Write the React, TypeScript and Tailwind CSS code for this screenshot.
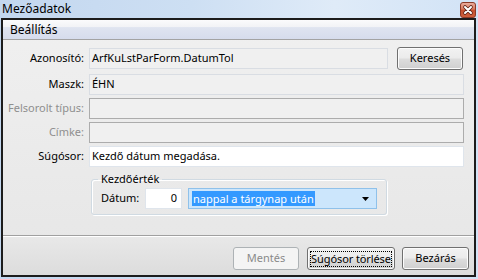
import React from "react";

function CloseButton() {
	return (
		<svg width="16" height="16" viewBox="0 0 16 16" className="mt-[2px]">
			<defs>
				<linearGradient id="cls" x1="0" y1="0" x2="0" y2="1">
					<stop offset="0" stopColor="#eab1a2" />
					<stop offset="0.45" stopColor="#d9775c" />
					<stop offset="0.5" stopColor="#c6502f" />
					<stop offset="1" stopColor="#d0603c" />
				</linearGradient>
			</defs>
			<rect x="0.5" y="0.5" width="15" height="15" rx="2.5" fill="url(#cls)" stroke="#8a3a27" />
			<path d="M5 5 L11 11 M11 5 L5 11" stroke="#5a2418" strokeWidth="3.6" strokeLinecap="round" />
			<path d="M5 5 L11 11 M11 5 L5 11" stroke="#ffffff" strokeWidth="2" strokeLinecap="round" />
		</svg>
	);
}

function Field({
	label,
	disabled,
	tone,
	children,
	first,
}: {
	label: string;
	disabled?: boolean;
	tone: "ro" | "dis" | "edit";
	children?: React.ReactNode;
	first?: boolean;
}) {
	const box =
		tone === "edit"
			? "bg-white border-[#dfe5ec]"
			: tone === "dis"
			? "bg-[#f0f0f0] border-[#acacac]"
			: "bg-[#f0f0f0] border-[#d9dde3]";
	return (
		<div className={`flex items-center h-[21px] ${first ? "mt-[4px]" : "mt-[3px]"}`}>
			<div
				className={`w-[81px] text-right ${
					disabled ? "text-[#8f8f8f]" : "text-black"
				}`}
			>
				{label}
			</div>
			<div
				className={`ml-[5px] flex-1 h-[21px] border ${box} pl-[2px] flex items-center`}
			>
				{children}
			</div>
		</div>
	);
}

const btn =
	"h-[23px] border border-[#707070] rounded-[3px] bg-[linear-gradient(180deg,#f2f2f2_0%,#ebebeb_48%,#dddddd_52%,#cfcfcf_100%)] shadow-[inset_0_0_0_1px_#fcfcfc] flex items-center justify-center text-black";

export default function App() {
	return (
		<div className="w-[478px] h-[279px] flex flex-col overflow-hidden bg-[linear-gradient(90deg,#c3d7ef_0%,#cddff3_40%,#dfebf8_70%,#d2e3f6_100%)] font-['Noto_Sans',sans-serif] text-[11px] text-black">
			{/* title bar */}
			<div className="h-[18px] flex items-start justify-between pl-[2px] pr-[2px]">
				<span className="text-[12px] leading-[18px]">Mezőadatok</span>
				<CloseButton />
			</div>

			<div className="flex-1 ml-px mr-[2px] mb-[2px] border-2 border-[#1c1c1c] flex flex-col bg-[linear-gradient(180deg,#f0f0f0,#e6e6e6)]">
				{/* section header */}
				<div className="h-[20px] border-b border-[#a3a3a3] bg-[linear-gradient(180deg,#fbfbfc_0%,#f2f3f6_35%,#dfe4f0_40%,#d6dcec_100%)] pl-[7px] flex items-center text-[12px]">
					Beállítás
				</div>

				{/* form */}
				<div className="flex-1 flex flex-col pt-[7px] pr-[10px]">
					<div className="flex items-center h-[23px]">
						<div className="w-[81px] text-right">Azonosító:</div>
						<div className="ml-[5px] w-[299px] h-[21px] border border-[#d9dde3] bg-[#f0f0f0] pl-[2px] flex items-center">
							ArfKuLstParForm.DatumTol
						</div>
						<button className={`${btn} ml-[9px] w-[66px]`}>Keresés</button>
					</div>
					<Field label="Maszk:" tone="ro" first>
						ÉHN
					</Field>
					<Field label="Felsorolt típus:" tone="dis" disabled />
					<Field label="Címke:" tone="dis" disabled />
					<Field label="Súgósor:" tone="edit">
						Kezdő dátum megadása.
					</Field>

					<fieldset className="ml-[88px] mt-[4px] w-[296px] border border-[#d0dae2] rounded-[3px] shadow-[inset_1px_1px_0_#ffffff,1px_1px_0_#ffffff] pt-[1px] pb-[5px]">
						<legend className="ml-[6px] px-[3px] leading-[16px]">Kezdőérték</legend>
						<div className="flex items-center pl-[9px]">
							<div className="w-[44px]">Dátum:</div>
							<div className="w-[37px] h-[21px] border border-[#dfe5ec] bg-white flex items-center justify-end pr-[4px]">
								0
							</div>
							<div className="ml-[6px] w-[189px] h-[21px] border border-[#8fc1ea] bg-[#cce6fc] flex items-center justify-between pl-[3px] pr-[7px]">
								<span className="bg-[#3399ff] text-white px-px leading-[15px]">
									nappal a tárgynap után
								</span>
								<svg width="7" height="4" viewBox="0 0 7 4">
									<path d="M0 0 H7 L3.5 4 Z" fill="#000" />
								</svg>
							</div>
						</div>
					</fieldset>
				</div>

				{/* separator */}
				<div className="h-[2px] border-t border-[#a0a0a0] border-b border-b-white" />

				{/* buttons */}
				<div className="h-[38px] flex items-start justify-end pt-[10px] pr-[5px] bg-[linear-gradient(180deg,#e8e8e8,#dcdcdc)]">
					<button className="h-[23px] w-[66px] border border-[#adb2b5] rounded-[3px] bg-[#f4f4f4] text-[#8a8a8a]">
						Mentés
					</button>
					<button className={`${btn} ml-[8px] w-[88px]`}>
						<span className="border border-dotted border-black leading-[14px] tracking-[-0.1px]">
							Súgósor törlése
						</span>
					</button>
					<button className={`${btn} ml-[7px] w-[67px]`}>Bezárás</button>
				</div>
			</div>
		</div>
	);
}
